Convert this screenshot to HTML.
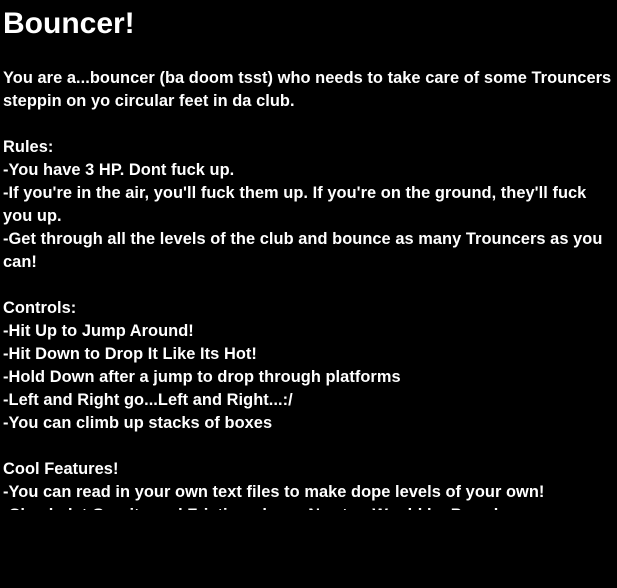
<html><head><style>
body{margin:0;background:#000;width:617px;height:588px;overflow:hidden}
#c{position:absolute;left:3px;top:1px;width:614px;height:509px;overflow:hidden;color:#fff;font:bold 16.4px/23px "Liberation Sans",sans-serif;white-space:nowrap;letter-spacing:0.05px}
h1{margin:0;height:46px;font:bold 30px/46px "Liberation Sans",sans-serif;letter-spacing:0}
div.l{height:23px}
</style></head><body><div id="c">
<h1>Bouncer!</h1>
<div class="l" style="margin-top:20px">You are a...bouncer (ba doom tsst) who needs to take care of some Trouncers</div>
<div class="l">steppin on yo circular feet in da club.</div>
<div class="l"></div>
<div class="l">Rules:</div>
<div class="l">-You have 3 HP. Dont fuck up.</div>
<div class="l">-If you're in the air, you'll fuck them up. If you're on the ground, they'll fuck</div>
<div class="l">you up.</div>
<div class="l">-Get through all the levels of the club and bounce as many Trouncers as you</div>
<div class="l">can!</div>
<div class="l"></div>
<div class="l">Controls:</div>
<div class="l">-Hit Up to Jump Around!</div>
<div class="l">-Hit Down to Drop It Like Its Hot!</div>
<div class="l">-Hold Down after a jump to drop through platforms</div>
<div class="l">-Left and Right go...Left and Right...:/</div>
<div class="l">-You can climb up stacks of boxes</div>
<div class="l"></div>
<div class="l">Cool Features!</div>
<div class="l">-You can read in your own text files to make dope levels of your own!</div>
<div class="l">-Check dat Gravity and Friction, dawg. Newton Would be Proud.</div>
</div></body></html>
